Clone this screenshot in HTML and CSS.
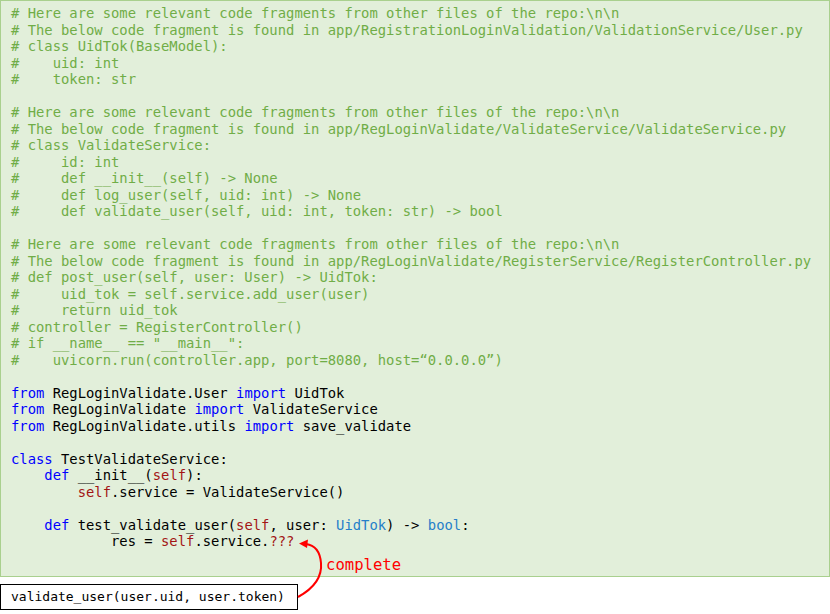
FILE: index.html
```html
<!DOCTYPE html>
<html>
<head>
<meta charset="utf-8">
<link rel="stylesheet" href="styles.css">
</head>
<body>
<div class="page">
<pre class="code"><span class="c"># Here are some relevant code fragments from other files of the repo:\n\n</span>
<span class="c"># The below code fragment is found in app/RegistrationLoginValidation/ValidationService/User.py</span>
<span class="c"># class UidTok(BaseModel):</span>
<span class="c">#    uid: int</span>
<span class="c">#    token: str</span>

<span class="c"># Here are some relevant code fragments from other files of the repo:\n\n</span>
<span class="c"># The below code fragment is found in app/RegLoginValidate/ValidateService/ValidateService.py</span>
<span class="c"># class ValidateService:</span>
<span class="c">#     id: int</span>
<span class="c">#     def __init__(self) -&gt; None</span>
<span class="c">#     def log_user(self, uid: int) -&gt; None</span>
<span class="c">#     def validate_user(self, uid: int, token: str) -&gt; bool</span>

<span class="c"># Here are some relevant code fragments from other files of the repo:\n\n</span>
<span class="c"># The below code fragment is found in app/RegLoginValidate/RegisterService/RegisterController.py</span>
<span class="c"># def post_user(self, user: User) -&gt; UidTok:</span>
<span class="c">#     uid_tok = self.service.add_user(user)</span>
<span class="c">#     return uid_tok</span>
<span class="c"># controller = RegisterController()</span>
<span class="c"># if __name__ == "__main__":</span>
<span class="c">#    uvicorn.run(controller.app, port=8080, host=“0.0.0.0”)</span>

<span class="k">from</span> RegLoginValidate.User <span class="k">import</span> UidTok
<span class="k">from</span> RegLoginValidate <span class="k">import</span> ValidateService
<span class="k">from</span> RegLoginValidate.utils <span class="k">import</span> save_validate

<span class="k">class</span> TestValidateService:
    <span class="k">def</span> __init__(<span class="s">self</span>):
        <span class="s">self</span>.service = ValidateService()

    <span class="k">def</span> test_validate_user(<span class="s">self</span>, user: <span class="t">UidTok</span>) -&gt; <span class="t">bool</span>:
            res = <span class="s">self</span>.service.<span class="s">???</span></pre>
<div class="answer">validate_user(user.uid, user.token)</div>
<svg class="overlay" width="830" height="614" viewBox="0 0 830 614">
  <path d="M298 597 C 318 586, 322 574, 321 563 C 320 551, 314 545, 306 544" fill="none" stroke="#ff0000" stroke-width="2"/>
  <path d="M299 543.5 L308 539.5 L307 548 Z" fill="#ff0000"/>
</svg>
<div class="label">complete</div>
</div>
</body>
</html>
```
FILE: styles.css
```css
html, body {
  margin: 0;
  padding: 0;
  background: #ffffff;
}
.page {
  position: relative;
  width: 830px;
  height: 614px;
  font-family: "DejaVu Sans Mono", monospace;
}
.code {
  margin: 0;
  box-sizing: border-box;
  width: 830px;
  height: 577px;
  padding: 4px 10px 0 10px;
  background: #e2efda;
  border: 1px solid #a9d08e;
  font-family: "DejaVu Sans Mono", monospace;
  font-size: 13.85px;
  line-height: 16.5px;
  color: #000000;
  white-space: pre;
}
.c { color: #70ad47; }
.k { color: #0000ff; }
.s { color: #a31515; }
.t { color: #267fc9; }
.answer {
  box-sizing: border-box;
  margin-top: 7px;
  width: 298px;
  height: 26px;
  border: 1px solid #000000;
  padding: 0 10px;
  font-size: 13px;
  line-height: 24px;
  color: #000000;
  white-space: pre;
}
.overlay {
  position: absolute;
  left: 0;
  top: 0;
  pointer-events: none;
}
.label {
  position: absolute;
  left: 326px;
  top: 555px;
  font-size: 15.6px;
  line-height: 20px;
  color: #ff0000;
}
```
